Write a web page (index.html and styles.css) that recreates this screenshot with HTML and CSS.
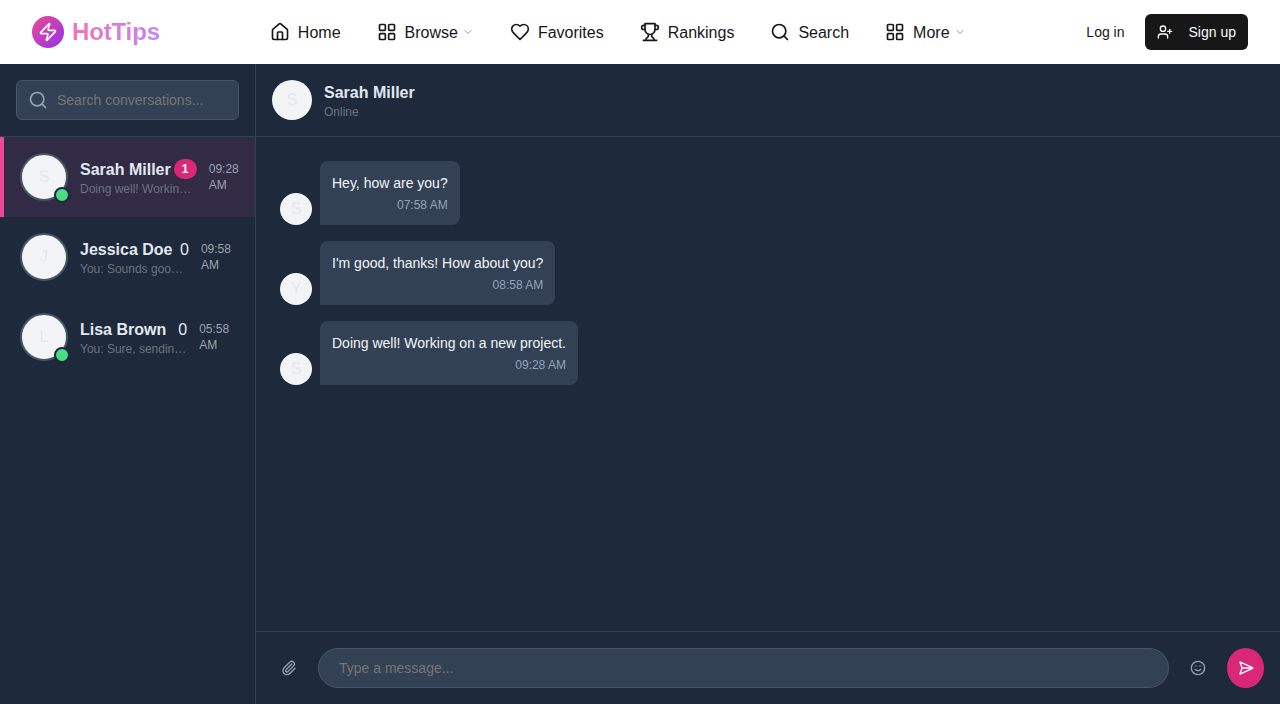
FILE: index.html
```html
<!DOCTYPE html>
<html>
<head>
    <meta charset="utf-8">
    <title>HotTips</title>
    <link rel="stylesheet" href="styles.css">
</head>

<body>
    <header class="topbar">
        <a class="logo" href="#">
            <span class="logoMark">
                <svg class="icon" width="20" height="20" viewBox="0 0 24 24"><path d="M4 14a1 1 0 0 1-.78-1.63l9.9-10.2a.5.5 0 0 1 .86.46l-1.92 6.02A1 1 0 0 0 13 10h7a1 1 0 0 1 .78 1.63l-9.9 10.2a.5.5 0 0 1-.86-.46l1.92-6.02A1 1 0 0 0 11 14z"/></svg>
            </span>
            <span class="logoText">HotTips</span>
        </a>

        <nav class="mainNav">
            <a class="navItem" href="#">
                <svg class="icon" width="20" height="20" viewBox="0 0 24 24"><path d="M15 21v-8a1 1 0 0 0-1-1h-4a1 1 0 0 0-1 1v8"/><path d="M3 10a2 2 0 0 1 .709-1.528l7-5.999a2 2 0 0 1 2.582 0l7 5.999A2 2 0 0 1 21 10v9a2 2 0 0 1-2 2H5a2 2 0 0 1-2-2z"/></svg>
                <span class="navLabel">Home</span>
            </a>
            <a class="navItem" href="#">
                <svg class="icon" width="20" height="20" viewBox="0 0 24 24"><rect width="7" height="7" x="3" y="3" rx="1"/><rect width="7" height="7" x="14" y="3" rx="1"/><rect width="7" height="7" x="14" y="14" rx="1"/><rect width="7" height="7" x="3" y="14" rx="1"/></svg>
                <span class="navLabel">Browse</span>
                <svg class="icon chevron" width="12" height="12" viewBox="0 0 24 24"><path d="m6 9 6 6 6-6"/></svg>
            </a>
            <a class="navItem" href="#">
                <svg class="icon" width="20" height="20" viewBox="0 0 24 24"><path d="M19 14c1.49-1.46 3-3.21 3-5.5A5.5 5.5 0 0 0 16.5 3c-1.76 0-3 .5-4.5 2-1.5-1.5-2.74-2-4.5-2A5.5 5.5 0 0 0 2 8.5c0 2.3 1.5 4.05 3 5.5l7 7Z"/></svg>
                <span class="navLabel">Favorites</span>
            </a>
            <a class="navItem" href="#">
                <svg class="icon" width="20" height="20" viewBox="0 0 24 24"><path d="M6 9H4.5a2.5 2.5 0 0 1 0-5H6"/><path d="M18 9h1.5a2.5 2.5 0 0 0 0-5H18"/><path d="M4 22h16"/><path d="M10 14.66V17c0 .55-.47.98-.97 1.21C7.85 18.75 7 20.24 7 22"/><path d="M14 14.66V17c0 .55.47.98.97 1.21C16.15 18.75 17 20.24 17 22"/><path d="M18 2H6v7a6 6 0 0 0 12 0V2Z"/></svg>
                <span class="navLabel">Rankings</span>
            </a>
            <a class="navItem" href="#">
                <svg class="icon" width="20" height="20" viewBox="0 0 24 24"><circle cx="11" cy="11" r="8"/><path d="m21 21-4.3-4.3"/></svg>
                <span class="navLabel">Search</span>
            </a>
            <a class="navItem" href="#">
                <svg class="icon" width="20" height="20" viewBox="0 0 24 24"><rect width="7" height="7" x="3" y="3" rx="1"/><rect width="7" height="7" x="14" y="3" rx="1"/><rect width="7" height="7" x="14" y="14" rx="1"/><rect width="7" height="7" x="3" y="14" rx="1"/></svg>
                <span class="navLabel">More</span>
                <svg class="icon chevron" width="12" height="12" viewBox="0 0 24 24"><path d="m6 9 6 6 6-6"/></svg>
            </a>
        </nav>

        <div class="authControl">
            <a class="loginLink" href="#">Log in</a>
            <a class="signupButton" href="#">
                <svg class="icon" width="16" height="16" viewBox="0 0 24 24"><path d="M16 21v-2a4 4 0 0 0-4-4H6a4 4 0 0 0-4 4v2"/><circle cx="9" cy="7" r="4"/><path d="M19 8v6"/><path d="M22 11h-6"/></svg>
                Sign up
            </a>
        </div>
    </header>

    <main class="chatApp">
        <aside class="sidebar">
            <div class="sidebarSearch">
                <div class="searchBox">
                    <svg class="icon" width="20" height="20" viewBox="0 0 24 24"><circle cx="11" cy="11" r="8"/><path d="m21 21-4.3-4.3"/></svg>
                    <input type="text" placeholder="Search conversations..." />
                </div>
            </div>

            <div class="conversation active">
                <div class="avatarWrap">
                    <div class="avatar large ringed">S</div>
                    <span class="onlineDot"></span>
                </div>
                <div class="conversationInfo">
                    <div class="nameRow">
                        <span class="name">Sarah Miller</span>
                        <span class="unread">1</span>
                    </div>
                    <div class="preview">Doing well! Working on a new project.</div>
                </div>
                <div class="time">09:28 AM</div>
            </div>

            <div class="conversation">
                <div class="avatarWrap">
                    <div class="avatar large ringed">J</div>
                </div>
                <div class="conversationInfo">
                    <div class="nameRow">
                        <span class="name">Jessica Doe</span>
                        <span class="count">0</span>
                    </div>
                    <div class="preview">You: Sounds good, see you then!</div>
                </div>
                <div class="time">09:58 AM</div>
            </div>

            <div class="conversation">
                <div class="avatarWrap">
                    <div class="avatar large ringed">L</div>
                    <span class="onlineDot"></span>
                </div>
                <div class="conversationInfo">
                    <div class="nameRow">
                        <span class="name">Lisa Brown</span>
                        <span class="count spaced">0</span>
                    </div>
                    <div class="preview">You: Sure, sending it over now.</div>
                </div>
                <div class="time">05:58 AM</div>
            </div>
        </aside>

        <section class="chat">
            <div class="chatHeader">
                <div class="avatar medium">S</div>
                <div>
                    <div class="chatName">Sarah Miller</div>
                    <div class="chatStatus">Online</div>
                </div>
            </div>

            <div class="messages">
                <div class="message">
                    <div class="avatar">S</div>
                    <div class="bubble">
                        <div>Hey, how are you?</div>
                        <div class="messageTime">07:58 AM</div>
                    </div>
                </div>
                <div class="message">
                    <div class="avatar">Y</div>
                    <div class="bubble">
                        <div>I'm good, thanks! How about you?</div>
                        <div class="messageTime">08:58 AM</div>
                    </div>
                </div>
                <div class="message">
                    <div class="avatar">S</div>
                    <div class="bubble">
                        <div>Doing well! Working on a new project.</div>
                        <div class="messageTime">09:28 AM</div>
                    </div>
                </div>
            </div>

            <div class="composer">
                <svg class="icon composerIcon" width="16" height="16" viewBox="0 0 24 24"><path d="M13.234 20.252 21 12.3"/><path d="m16 6-8.414 8.586a2 2 0 0 0 0 2.828 2 2 0 0 0 2.828 0l8.414-8.586a4 4 0 0 0 0-5.656 4 4 0 0 0-5.656 0l-8.415 8.585a6 6 0 1 0 8.486 8.486"/></svg>
                <input class="messageInput" type="text" placeholder="Type a message..." />
                <svg class="icon composerIcon" width="16" height="16" viewBox="0 0 24 24"><circle cx="12" cy="12" r="10"/><path d="M8 14s1.5 2 4 2 4-2 4-2"/><path d="M9 9h.01"/><path d="M15 9h.01"/></svg>
                <button class="sendButton" type="button">
                    <svg class="icon" width="16" height="16" viewBox="0 0 24 24"><path d="M3.714 3.048a.498.498 0 0 0-.683.627l2.843 7.627a2 2 0 0 1 0 1.396l-2.842 7.627a.498.498 0 0 0 .682.627l18-8.5a.5.5 0 0 0 0-.904z"/><path d="M6 12h16"/></svg>
                </button>
            </div>
        </section>
    </main>
</body>

</html>
```

FILE: styles.css
```css
body {
    margin: 0;
    background-color: #fff;
    font-family: "Liberation Sans", Arial, sans-serif;
}

a {
    color: inherit;
    text-decoration: none;
}

input {
    font-family: inherit;
    outline: none;
}

input::placeholder {
    color: #757575;
}

.icon {
    flex: none;
    fill: none;
    stroke: currentColor;
    stroke-width: 2;
    stroke-linecap: round;
    stroke-linejoin: round;
}

.topbar {
    display: flex;
    align-items: center;
    height: 64px;
    padding: 0 32px;
    color: #171717;
}

.logo {
    display: flex;
    align-items: center;
    gap: 8px;
}

.logoMark {
    display: flex;
    align-items: center;
    justify-content: center;
    width: 32px;
    height: 32px;
    border-radius: 50%;
    color: #fff;
    background: linear-gradient(135deg, #ec4899, #9333ea);
}

.logoText {
    font-size: 24px;
    font-weight: 700;
    letter-spacing: -0.15px;
    color: transparent;
    background: linear-gradient(90deg, #f472b6, #c084fc);
    -webkit-background-clip: text;
    background-clip: text;
}

.mainNav {
    display: flex;
    align-items: center;
    gap: 36px;
    margin-left: 110px;
    font-size: 16px;
}

.navItem {
    display: flex;
    align-items: center;
    gap: 8px;
}

.navLabel {
    padding-top: 2px;
}

.chevron {
    margin-left: -4px;
    color: #737373;
    stroke-width: 1.5;
}

.authControl {
    display: flex;
    align-items: center;
    gap: 20px;
    margin-left: auto;
    font-size: 14px;
}

.signupButton {
    display: flex;
    align-items: center;
    gap: 16px;
    height: 36px;
    padding: 0 12px;
    border-radius: 6px;
    color: #fafafa;
    background-color: #171717;
}

.chatApp {
    display: flex;
    height: 640px;
    background-color: #1e293b;
}

.sidebar {
    width: 255px;
    border-right: 1px solid #334155;
}

.sidebarSearch {
    padding: 16px;
    border-bottom: 1px solid #334155;
}

.searchBox {
    display: flex;
    align-items: center;
    gap: 9px;
    height: 38px;
    padding: 0 11px;
    border: 1px solid #475569;
    border-radius: 6px;
    color: #94a3b8;
    background-color: #334155;
}

.searchBox input {
    flex: 1;
    min-width: 0;
    padding: 0;
    border: none;
    font-size: 14px;
    background: none;
}

.conversation {
    display: flex;
    align-items: center;
    gap: 12px;
    height: 80px;
    padding: 0 16px;
    border-left: 4px solid transparent;
    box-sizing: border-box;
}

.conversation.active {
    border-left-color: #ec4899;
    background-color: rgba(236, 72, 153, 0.1);
}

.avatarWrap {
    position: relative;
    flex: none;
}

.avatar {
    display: flex;
    flex: none;
    align-items: center;
    justify-content: center;
    width: 32px;
    height: 32px;
    border-radius: 50%;
    font-size: 16px;
    color: #e2e8f0;
    background-color: #f3f4f6;
}

.avatar.medium {
    width: 40px;
    height: 40px;
}

.avatar.large {
    width: 48px;
    height: 48px;
}

.avatar.ringed {
    box-sizing: border-box;
    border: 2px solid #475569;
}

.onlineDot {
    position: absolute;
    right: -2px;
    bottom: -2px;
    width: 12px;
    height: 12px;
    border: 2px solid #1e293b;
    border-radius: 50%;
    background-color: #4ade80;
}

.conversationInfo {
    flex: none;
    padding-top: 1px;
}

.nameRow {
    display: flex;
    align-items: center;
    height: 22px;
    white-space: nowrap;
}

.name {
    padding-top: 2px;
    font-size: 16px;
    font-weight: 700;
    color: #e2e8f0;
}

.count {
    margin-left: 7.5px;
    padding-top: 2px;
    font-size: 16px;
    color: #e2e8f0;
}

.count.spaced {
    margin-left: 12px;
}

.unread {
    margin-left: 3px;
    padding: 0 8px;
    min-width: 7px;
    border-radius: 10px;
    font-size: 12px;
    font-weight: 700;
    line-height: 20px;
    text-align: center;
    color: #fff;
    background-color: #db2777;
}

.preview {
    width: 0;
    min-width: 100%;
    margin-top: 1px;
    overflow: hidden;
    font-size: 12px;
    line-height: 16px;
    color: #6b7280;
    text-overflow: ellipsis;
    white-space: nowrap;
}

.time {
    width: min-content;
    font-size: 12px;
    line-height: 16px;
    color: #9ca3af;
}

.chat {
    display: flex;
    flex: 1;
    flex-direction: column;
    min-width: 0;
}

.chatHeader {
    display: flex;
    align-items: center;
    gap: 12px;
    height: 72px;
    padding: 0 16px;
    border-bottom: 1px solid #334155;
}

.chatName {
    margin-bottom: -1px;
    padding-top: 1px;
    font-size: 16px;
    font-weight: 700;
    line-height: 24px;
    color: #e2e8f0;
}

.chatStatus {
    font-size: 12px;
    line-height: 16px;
    color: #6b7280;
}

.messages {
    display: flex;
    flex: 1;
    flex-direction: column;
    align-items: flex-start;
    gap: 16px;
    padding: 24px;
}

.message {
    display: flex;
    align-items: flex-end;
    gap: 8px;
}

.bubble {
    padding: 12px;
    border-radius: 8px 8px 8px 0;
    font-size: 14px;
    line-height: 20px;
    color: #f1f5f9;
    background-color: #334155;
}

.messageTime {
    margin-top: 4px;
    font-size: 12px;
    line-height: 16px;
    text-align: right;
    color: #94a3b8;
}

.composer {
    display: flex;
    flex: none;
    align-items: center;
    gap: 21px;
    height: 73px;
    padding: 0 16px 0 25px;
    border-top: 1px solid #334155;
    box-sizing: border-box;
}

.composerIcon {
    color: #94a3b8;
}

.messageInput {
    flex: 1;
    min-width: 0;
    box-sizing: border-box;
    height: 40px;
    padding: 0 20px;
    border: 1px solid #475569;
    border-radius: 20px;
    font-size: 14px;
    color: #fff;
    background-color: #334155;
}

.sendButton {
    display: flex;
    flex: none;
    align-items: center;
    justify-content: center;
    width: 37px;
    height: 40px;
    padding: 0;
    border: none;
    border-radius: 50%;
    color: #fff;
    background-color: #db2777;
}
```
